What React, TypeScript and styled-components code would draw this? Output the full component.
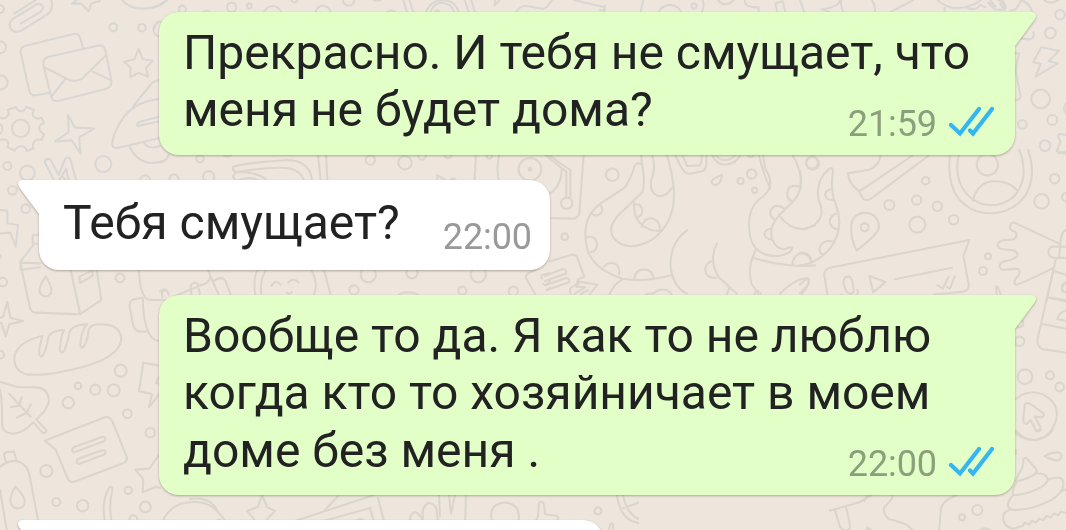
import React from "react"
import styled, { createGlobalStyle } from "styled-components"

const GlobalStyle = createGlobalStyle`
  body {
    margin: 0;
    background: #eee6dd;
    overflow: hidden;
  }
`

interface SideProps {
  $outgoing?: boolean
}

const Chat = styled.main`
  position: relative;
  height: 530px;
  overflow: hidden;
  background: #eee6dd;
  font-family: Roboto, sans-serif;
`

const Wallpaper = styled.svg`
  position: absolute;
  top: 0;
  left: 0;
  fill: none;
  stroke-width: 6.3;
  stroke-linejoin: round;
  stroke-linecap: round;
`

const Messages = styled.div`
  position: relative;
  display: flex;
  flex-direction: column;
  align-items: flex-start;
  gap: 25px;
  padding: 12px 51px 0 39px;
`

interface BubbleProps extends SideProps {
  $width: number
  $height: number
}

const Bubble = styled.article<BubbleProps>`
  position: relative;
  box-sizing: border-box;
  display: flex;
  flex: none;
  justify-content: space-between;
  align-self: ${(props) => (props.$outgoing ? "flex-end" : "flex-start")};
  width: ${(props) => props.$width}px;
  height: ${(props) => props.$height}px;
  padding: ${(props) => (props.$outgoing ? "12px 21px 13px 24px" : "14px 18px 15px 24px")};
  background: ${(props) => (props.$outgoing ? "#e1ffc7" : "#fff")};
  border-radius: ${(props) => (props.$outgoing ? "20px 0 20px 20px" : "0 20px 20px 20px")};
  filter: drop-shadow(0 1.5px 1px rgba(70, 55, 45, 0.38));
`

const Tail = styled.svg<SideProps>`
  position: absolute;
  top: 0;
  ${(props) => (props.$outgoing ? "right: -22px;" : "left: -22px;")}
  fill: ${(props) => (props.$outgoing ? "#e1ffc7" : "#fff")};
  transform: ${(props) => (props.$outgoing ? "none" : "scaleX(-1)")};
`

const Text = styled.p`
  margin: 0;
  font-size: 48px;
  line-height: 57.3px;
  letter-spacing: -0.01px;
  color: #222;
  white-space: nowrap;
`

const Meta = styled.div`
  display: flex;
  align-items: center;
  align-self: flex-end;
  justify-content: flex-end;
  gap: 11px;
  width: 0;
`

const Time = styled.time<SideProps>`
  font-size: 36px;
  line-height: 36px;
  letter-spacing: -0.1px;
  color: ${(props) => (props.$outgoing ? "#8c9f7c" : "#999")};
`

const Ticks = styled.svg`
  flex: none;
  margin-top: -6px;
  fill: none;
  stroke: #34b7f1;
  stroke-width: 4.2;
  stroke-linecap: round;
`

interface Doodle {
  x: number
  y: number
  color: string
  paths: string[]
  circles: [number, number, number][]
}

const cool = "#dad7d2"
const warm = "#dbd6cb"

// every patch is drawn on a grid three times finer than the page
const doodles: Doodle[] = [
  {
    // envelope, star, gear, rocket
    x: 0,
    y: 0,
    color: cool,
    paths: [
      "M42 41L99 5M42 41L107 0M62 71L121 36Q136 22 124 14Q116 8 105 16L42 54Q24 66 31 84Q42 102 64 92L141 44Q162 28 154 0",
      "M216 11L242 10L266 34L274 10L300 3M216 11L230 0",
      "M366 0Q388 26 430 26Q470 25 495 4",
      "M146 279L108 286Q92 288 88 274L62 157Q60 143 74 138L220 102Q236 99 240 112L249 144",
      "M143 171L292 137Q312 133 316 151L334 239Q337 259 320 266L175 303Q160 306 154 292L130 196Q128 176 143 171Z",
      "M132 201L206 239Q230 248 247 235L316 168M154 290L196 237M278 215L332 240",
      "M416 146L428 178L458 182L438 204L444 230L416 218L391 232L392 204L373 185L403 178Z",
      "M48 321Q52 334 63 334Q74 334 79 320L102 329Q94 342 102 351Q112 360 124 353L132 369Q117 374 118 385Q118 395 132 403L125 420Q112 416 103 424Q95 434 101 445L81 453Q76 439 64 438Q52 438 44 452L22 441Q28 430 21 422Q12 415 0 420M48 321L23 330Q30 342 21 350Q12 360 0 352M0 371Q8 378 7 387Q7 397 0 402",
      "M204 345L224 382L282 386L237 412L242 461L215 421L166 424L206 396Z",
      "M495 240Q470 238 455 250L400 318M495 295Q410 300 372 350Q340 396 337 428Q334 447 356 443L495 410M495 346L418 366Q409 371 413 378L495 360M390 441Q410 486 454 489Q480 488 495 480M433 430Q448 450 480 438",
      "M162 540L134 487Q134 475 150 477L176 525L196 476Q208 467 212 480L228 540M178 540L198 507L207 540M188 530L198 540",
      "M0 630L22 632V670L54 675L47 740L31 698L0 700M98 705L116 704M98 705V730L112 732M100 735L62 784V810L120 802",
    ],
    circles: [
      [0, 142, 18],
      [2, 247, 21],
      [0, 27, 12],
      [340, 82, 12],
      [426, 83, 11],
      [482, 88, 22],
      [62, 385, 26],
      [22, 498, 12],
      [82, 519, 22],
      [310, 492, 24],
      [37, 571, 13],
      [77, 626, 13],
      [436, 540, 14],
      [-4, 769, 6],
    ],
  },
  {
    // milk carton, bread, leaf, speech card, bottle
    x: 0,
    y: 260,
    color: warm,
    paths: [
      "M120 10L61 8Q80 100 90 142Q92 156 106 158L240 163L304 120L290 30M61 8L66 0M212 30L240 160M238 50L278 32V47L240 69Z",
      "M137 49Q112 86 121 99Q134 119 152 101Q161 86 137 49Z",
      "M22 126L31 173L70 183L28 193L17 229L5 190L0 188M22 126L10 169L0 174",
      "M127 227Q56 245 44 285Q38 332 80 343Q140 350 250 320Q356 292 364 239Q362 193 305 193Q274 190 266 209Q260 258 246 264Q236 259 246 222Q253 198 262 193Q217 194 209 215Q201 260 190 276Q174 280 182 249Q184 223 193 210Q153 210 145 232Q138 278 124 291Q114 286 119 261Z",
      "M0 366L52 381L111 382Q146 386 147 425Q138 456 108 478L139 511Q139 523 126 517L100 487Q64 526 29 520Q7 516 6 490Q8 430 0 388M28 402L92 470M32 442L57 437L65 412M50 473L80 459L92 433",
      "M134 542L314 472Q329 468 337 484L380 590Q384 602 371 609L223 665Q208 669 202 653L167 569ZM221 562L308 530Q321 532 314 543L223 577Q210 574 221 562ZM234 597L308 570Q322 572 314 583L237 612Q224 610 234 597Z",
      "M18 606L12 584Q12 578 22 576L42 575L49 600M0 621Q22 600 52 604Q82 612 89 648L114 780M0 690L20 810M46 680Q25 716 34 734Q48 754 70 738Q85 718 46 680Z",
      "M314 780Q304 720 328 682Q338 676 337 690Q326 735 334 780",
      "M417 30Q418 80 430 104Q436 118 452 120L495 120M424 114L402 118Q388 122 389 140L400 198Q404 217 438 215M428 114Q430 180 444 214Q456 244 480 242M495 91Q480 96 488 112",
      "M480 317L430 308L417 394L456 402L447 442L480 399M480 345L468 369L480 371",
      "M480 580L448 626L406 629L430 658L428 697L468 680L480 684",
    ],
    circles: [
      [8, 66, 13],
      [360, 54, 13],
      [0, 284, 12],
      [362, 332, 18],
      [234, 378, 10],
      [286, 389, 15],
      [341, 391, 18],
      [205, 428, 17],
      [382, 461, 13],
      [451, 518, 14],
      [139, 633, 18],
      [169, 726, 12],
      [248, 737, 17],
      [385, 691, 11],
      [436, 741, 16],
      [400, 778, 12],
    ],
  },
  {
    // octopus, left half
    x: 545,
    y: 150,
    color: warm,
    paths: [
      "M0 12L42 48L64 65V142M12 14L46 40L76 60V142M116 15L103 188Q98 208 78 206L15 204M50 60Q48 110 15 130",
      "M288 15L291 40Q304 120 286 132L218 198Q186 236 206 264Q245 310 320 270Q396 216 386 110Q380 60 366 15",
      "M287 42Q270 34 265 60Q248 106 236 115L170 158Q102 206 128 302Q150 360 232 386Q300 398 378 376",
      "M322 15Q334 56 318 94Q314 126 338 138Q364 142 382 112M268 158Q262 220 318 240L344 244",
      "M138 190Q160 204 171 186Q174 168 162 165M124 262Q152 254 156 282Q156 304 138 306M176 350Q194 333 212 342Q226 352 222 374M268 388Q270 358 298 358Q322 360 326 384M266 164Q288 158 292 180Q292 200 274 202M290 230Q298 204 320 205Q346 210 345 242",
      "M426 241Q370 280 378 360Q386 410 426 432M516 280Q490 330 520 380L576 432M505 332Q484 336 481 356Q480 384 514 384M232 388Q205 404 194 432M552 416L546 432M303 432Q318 432 324 430",
      "M390 15L408 50Q420 74 436 71L472 63Q482 60 484 45V15M412 15L426 48L462 46Q470 45 471 15M502 15Q514 45 542 44Q574 40 584 18M514 15Q524 32 542 30Q562 28 570 15",
      "M530 74Q530 100 512 106Q492 100 504 88Z",
      "M642 15Q656 76 674 110Q670 130 640 150Q602 184 616 262Q630 320 700 318Q740 312 742 292Q730 290 722 297Q696 300 682 270Q670 232 702 196L748 150Q774 118 767 78Q758 38 742 15M654 15L662 60Q680 80 674 116",
      "M702 196Q738 242 780 237L810 226M634 298Q604 352 620 402L640 432M626 324Q720 354 810 346M742 344Q744 314 772 310Q792 312 798 332M764 110Q734 102 728 122Q722 150 744 154M716 174Q692 160 678 178Q670 196 688 208M676 236Q660 240 658 252Q662 268 680 268",
      "M15 334L80 314Q94 313 98 326L118 380L100 388Q98 402 80 412Q70 418 78 432M0 378L54 357Q68 360 62 371L0 393M0 406L64 384Q76 386 72 397L8 419M88 432L120 412L94 410L104 395L158 404L134 432M108 432L130 420",
      "M704 432Q750 386 786 384Q798 394 782 417L770 432M628 432L638 422L648 432M326 430Q340 416 360 419Q376 424 380 434",
    ],
    circles: [
      [202, 74, 19],
      [65, 160, 17],
      [59, 260, 10],
      [620, 72, 14],
      [587, 93, 9],
      [629, 121, 8],
      [617, 12, 9],
      [801, 38, 18],
    ],
  },
  {
    // octopus arm, pin, voice message, portrait, hand
    x: 800,
    y: 150,
    color: warm,
    paths: [
      "M0 237Q52 236 65 192Q66 170 56 150Q44 94 88 56Q98 50 99 62Q90 120 106 160Q136 234 90 296Q48 342 0 347M92 118Q74 122 76 138Q80 150 98 150M108 190Q86 200 90 220Q96 236 114 238M104 276Q72 266 60 290Q54 306 68 314M0 308Q30 306 34 334",
      "M242 15Q238 48 206 60Q170 66 144 70Q146 102 178 124L340 15M178 126L188 145Q196 154 212 147L388 15",
      "M170 302Q150 262 154 224Q160 190 196 188Q236 192 237 232Q236 250 170 302Z",
      "M82 432L73 376Q70 360 90 353L508 270L490 318L506 402Q508 420 490 425L400 434M284 388L456 353M208 378L256 396L220 427ZM130 396Q132 380 146 379Q158 380 161 420Q162 430 152 432Q136 430 130 396M124 432L128 436M172 419Q176 430 170 434M412 405L428 416L446 380M440 410L450 416L464 379",
      "M450 15Q440 100 476 146Q525 204 606 185Q690 160 696 70Q696 30 684 0M476 15Q462 80 494 124Q532 172 592 164Q658 150 670 80Q674 38 658 0M519 152Q530 102 574 94Q626 90 652 122",
      "M776 280L646 219Q632 214 630 230Q626 238 646 246Q656 256 642 268L612 270Q590 274 593 289Q598 300 636 300Q656 306 652 318Q638 332 610 334Q592 344 604 359Q618 360 648 356Q664 356 656 376Q638 392 646 404Q656 406 762 353",
      "M798 240Q782 246 780 290M798 290L760 290Q742 292 746 312Q748 323 770 324H798M780 290L778 322M768 324L740 450M764 364L798 374M798 400Q786 404 786 424L798 426M0 404Q22 380 27 388Q30 402 0 430M0 62Q5 88 0 112",
      "M590 434L588 410Q592 402 602 434M770 0Q770 10 798 6M742 442L798 450",
    ],
    circles: [
      [38, 40, 19],
      [377, 92, 11],
      [350, 150, 14],
      [268, 165, 15],
      [412, 169, 14],
      [352, 224, 24],
      [461, 209, 14],
      [194, 232, 12],
      [562, 44, 32],
      [764, 86, 14],
      [725, 154, 22],
      [798, 142, 12],
      [564, 319, 9],
      [549, 363, 12],
    ],
  },
  {
    // right edge, above
    x: 1000,
    y: 0,
    color: cool,
    paths: [
      "M0 10Q10 30 17 24Q14 10 6 0M62 0Q92 12 96 34M100 96Q104 116 90 118L64 116M124 142L177 152L146 184L173 190L107 230L122 192L100 186ZM46 160L58 160Q42 210 52 240L62 288Q60 300 46 300",
      "M198 310Q186 328 198 340M198 404L178 402Q170 406 182 426Q170 446 174 458L198 460M132 0Q152 16 176 0",
    ],
    circles: [
      [180, 44, 14],
      [151, 99, 16],
      [122, 297, 28],
      [67, 373, 13],
      [157, 360, 15],
      [135, 437, 16],
    ],
  },
  {
    // right edge, below: arrow badge, swirl
    x: 1000,
    y: 270,
    color: warm,
    paths: [
      "M160 0L112 210Q112 230 128 238L198 248M148 84L198 94M126 162L198 176M198 36Q180 44 188 62L198 66M198 122Q176 126 172 148L198 152",
      "M46 388Q86 354 130 374Q178 400 169 446Q156 500 106 510Q68 510 46 488M70 448L74 404Q80 396 92 402L130 430Q134 438 126 442L104 440L122 472Q122 484 108 482L92 450L80 462Q70 462 70 448Z",
      "M134 558Q158 544 180 548Q190 558 178 570Q160 574 134 558ZM48 540V552",
      "M48 634Q48 626 56 612Q72 590 70 568Q76 558 84 570L106 594Q114 606 106 612Q76 630 48 634ZM106 610Q140 608 143 628Q140 650 84 668Q38 680 38 672Q36 660 50 636M142 630Q184 612 190 636Q194 668 150 692Q90 722 40 720Q22 716 24 702Q28 684 42 674M28 720Q6 726 10 752Q16 772 40 776L68 768L74 758L88 764L96 752L108 758L118 746L130 750L140 738L152 742L162 730L174 736L182 726L198 728M188 662L198 658",
    ],
    circles: [
      [59, 214, 14],
      [75, 320, 22],
      [150, 316, 12],
      [179, 351, 13],
      [58, 160, 12],
    ],
  },
  {
    // strips around the incoming bubble
    x: 160,
    y: 150,
    color: warm,
    paths: [
      "M220 50Q260 38 380 30Q448 30 456 90M228 66Q330 50 380 54Q420 58 432 90M220 50Q216 62 228 66L218 80L226 90M228 66Q290 64 320 90M236 90Q270 78 292 90M474 15L482 90M498 15L502 90M190 15Q204 24 214 15M0 38Q20 34 26 15",
      "M948 15L944 90M1018 15Q1008 50 1016 90M832 90V76L846 84L856 90M870 90L880 84L888 90M1156 15L1170 26",
      "M286 434Q278 390 292 360M304 434Q298 390 318 360M454 360Q476 400 462 434M492 360L512 434M334 408Q346 386 362 404M384 398Q400 380 416 398M380 428Q388 434 396 426M144 360Q160 384 138 400L40 440M150 376L176 434M160 394Q184 376 196 392L212 434M94 434L92 408Q100 392 114 402L120 434M0 424Q20 410 26 434M716 434Q740 420 776 434M1126 434L1098 384Q1096 374 1108 368L1126 360M1146 386Q1140 374 1156 372L1170 370M1150 402Q1160 410 1170 392M1160 420L1170 414",
    ],
    circles: [
      [120, 26, 11],
      [631, 30, 14],
      [735, 38, 20],
      [786, 18, 11],
      [988, 18, 8],
      [1110, 58, 34],
      [1110, 58, 4],
      [42, 86, 13],
      [146, 80, 17],
      [625, 374, 23],
      [756, 368, 17],
      [955, 374, 23],
      [582, 420, 14],
      [907, 422, 12],
      [1060, 424, 14],
      [864, 15, 10],
    ],
  },
  {
    // strip above the first bubble
    x: 150,
    y: 0,
    color: cool,
    paths: [
      "M0 24Q30 20 52 0M342 36Q352 18 370 18Q386 20 394 36M496 36Q504 16 520 17Q538 20 542 36M760 0L770 36M778 0L790 36M828 36Q842 0 880 0Q916 2 926 36M842 36Q850 8 878 8Q906 12 912 36M944 0L956 36M964 0L974 36M1034 16L1050 0M1034 16L1036 0M1098 36Q1110 16 1130 18L1176 26Q1190 28 1206 0M1272 0L1358 20Q1366 24 1362 36M670 0Q680 4 692 0M12 90Q14 70 28 64M712 36Q724 26 736 36M160 36Q170 28 180 36",
    ],
    circles: [
      [97, 28, 11],
      [245, 22, 14],
      [298, 18, 7],
      [434, -3, 10],
      [596, 0, 17],
      [861, 37, 6],
    ],
  },
  {
    x: 600,
    y: 0,
    color: cool,
    paths: [
      "M122 36L130 0M176 36Q186 16 212 14Q236 18 244 36M308 0Q314 18 306 36M354 0Q374 26 402 0M434 0Q434 24 476 22L476 36M532 36L526 10L548 4L556 36M600 0L612 36M664 28Q716 22 720 0M664 28L690 36M724 0Q720 18 730 36M816 0Q828 20 824 36M940 0L872 36M1012 0Q1046 32 1096 22Q1130 12 1142 0M1096 22Q1130 36 1140 14L1156 22M1034 24V36M1170 0L1186 20L1164 8L1184 28L1214 30Q1214 10 1196 0M1232 32Q1254 30 1262 0Q1290 10 1296 36M0 30Q18 34 14 16",
    ],
    circles: [[282, 18, 8]],
  },
  {
    // strip under the last bubble
    x: 830,
    y: 430,
    color: warm,
    paths: [
      "M0 242L90 216L124 195M104 212L110 196M14 238L30 290Q44 308 58 298Q64 290 48 232M188 196Q188 210 164 230Q156 250 178 268Q210 276 230 284L248 300M328 300L332 240Q334 214 380 196M110 300L112 292L124 300M450 300Q464 290 480 300M556 0Q586 34 620 30Q654 22 668 0M616 0Q624 8 632 0",
    ],
    circles: [
      [442, 240, 15],
      [396, 262, 9],
    ],
  },
]

// whale, star, photo, hand and balloon peeking out above the last message
const bottomStrip = [
  "M160 529Q164 511 180 504Q204 498 216 510Q226 520 230 529M163 525Q172 521 179 529M190 499Q210 496 217 510",
  "M262 495L267 507L275 511L267 519L268 529M262 495L258 507L247 511L254 519L253 529L262 524L270 529",
  "M284 529L289 523L374 495M295 529L370 508L376 529M378 498L386 529M324 511L338 496M353 529Q352 520 361 519Q368 521 367 529",
  "M414 529Q406 518 414 512Q422 513 425 529M425 527Q419 508 428 503Q437 503 437 515L440 529M439 495L440 516M449 495L451 514L455 495M466 495L465 529M439 529Q446 524 458 529",
  "M496 529Q486 513 496 505Q508 499 517 508Q522 520 514 529M527 526Q536 524 538 516L539 503Q543 500 544 505L545 514L557 516Q560 520 556 521L548 523L550 529M527 526L531 529",
  "M567 529Q568 520 575 521Q579 523 579 529M617 495Q620 520 638 523M623 495Q626 512 638 519M623 508L638 503M609 529Q611 520 613 525V529",
]

const StripGroup = styled.g`
  stroke: ${warm};
  stroke-width: 2.1;
`

const Background: React.FC = () => {
  return (
    <Wallpaper width="1066" height="530" viewBox="0 0 1066 530">
      {doodles.map((doodle) => (
        <g
          key={`${doodle.x}-${doodle.y}`}
          transform={`translate(${doodle.x} ${doodle.y}) scale(0.33333)`}
          stroke={doodle.color}
        >
          {doodle.paths.map((d) => (
            <path key={d} d={d} />
          ))}
          {doodle.circles.map(([cx, cy, r]) => (
            <circle key={`${cx}-${cy}`} cx={cx} cy={cy} r={r} />
          ))}
        </g>
      ))}
      <StripGroup>
        {bottomStrip.map((d) => (
          <path key={d} d={d} />
        ))}
        <circle cx="219" cy="521" r="1.5" />
        <circle cx="598" cy="511" r="3.5" />
      </StripGroup>
    </Wallpaper>
  )
}

interface MessageProps {
  lines: string[]
  time?: string
  outgoing?: boolean
  width: number
  height: number
}

const Message: React.FC<MessageProps> = ({ lines, time, outgoing, width, height }) => {
  return (
    <Bubble $outgoing={outgoing} $width={width} $height={height}>
      <Tail $outgoing={outgoing} width="23" height="36" viewBox="0 0 23 36">
        <path d="M0 0H18Q24 1 21 7L1 34V36H0Z" />
      </Tail>
      <Text>
        {lines.map((line, i) => (
          <React.Fragment key={line}>
            {i > 0 && <br />}
            {line}
          </React.Fragment>
        ))}
      </Text>
      {time && (
        <Meta>
          <Time $outgoing={outgoing}>{time}</Time>
          {outgoing && (
            <Ticks width="46" height="32" viewBox="0 0 46 32">
              <path d="M3 20L12 28.5L31 4M22 25.5L25 28.5L44 4" />
            </Ticks>
          )}
        </Meta>
      )}
    </Bubble>
  )
}

const App: React.FC = () => {
  return (
    <Chat>
      <GlobalStyle />
      <Background />
      <Messages>
        <Message
          outgoing
          width={856}
          height={143}
          lines={["Прекрасно. И тебя не смущает, что", "меня не будет дома?"]}
          time="21:59"
        />
        <Message width={511} height={90} lines={["Тебя смущает?"]} time="22:00" />
        <Message
          outgoing
          width={856}
          height={200}
          lines={["Вообще то да. Я как то не люблю", "когда кто то хозяйничает в моем", "доме без меня ."]}
          time="22:00"
        />
        <Message width={564} height={90} lines={[]} />
      </Messages>
    </Chat>
  )
}

export default App
